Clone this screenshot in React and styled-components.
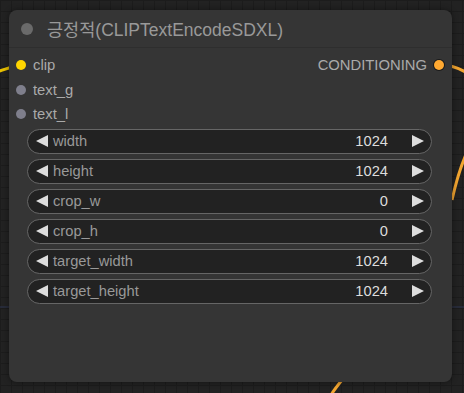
import React from 'react';
import styled, { createGlobalStyle } from 'styled-components';

const GlobalStyle = createGlobalStyle`
  html, body {
    margin: 0;
    padding: 0;
    background: #222222;
    font-family: "Liberation Sans", Arial, "Noto Sans CJK KR", sans-serif;
  }
`;

const inputs = [
  { name: 'clip', color: '#ffd500' },
  { name: 'text_g', color: '#7f7f8c' },
  { name: 'text_l', color: '#7f7f8c' },
];

const widgets = [
  { name: 'width', value: 1024 },
  { name: 'height', value: 1024 },
  { name: 'crop_w', value: 0 },
  { name: 'crop_h', value: 0 },
  { name: 'target_width', value: 1024 },
  { name: 'target_height', value: 1024 },
];

const Canvas = styled.div`
  position: relative;
  width: 464px;
  height: 393px;
  overflow: hidden;
  padding: 10px 0 0 9px;
  box-sizing: border-box;
  background-color: #222222;
  background-image:
    linear-gradient(to right, #1c1c1c 1px, transparent 1px),
    linear-gradient(to bottom, #1c1c1c 1px, transparent 1px);
  background-size: 11px 11px;
`;

const Wires = styled.svg`
  position: absolute;
  left: 0;
  top: 0;
  pointer-events: none;
`;

const Node = styled.div`
  position: relative;
  width: 443px;
  height: 372px;
  background: #353535;
  border-radius: 8px;
  box-shadow: 0 0 6px rgba(0, 0, 0, 0.45);
  display: flex;
  flex-direction: column;
`;

const Title = styled.div`
  height: 37px;
  display: flex;
  align-items: center;
  gap: 14px;
  padding-left: 12px;
  border-bottom: 1px solid #2e2e2e;
  color: #999999;
  font-size: 17.5px;
`;

const TitleDot = styled.span`
  width: 12px;
  height: 12px;
  border-radius: 50%;
  background: #6a6a6a;
`;

const Slots = styled.div`
  display: flex;
  justify-content: space-between;
  padding: 5px 0 0 0;
`;

const SlotCol = styled.div`
  display: flex;
  flex-direction: column;
`;

const Slot = styled.div`
  height: 24.5px;
  display: flex;
  align-items: center;
  gap: 7px;
  flex-direction: ${(p) => (p.$out ? 'row-reverse' : 'row')};
  padding: ${(p) => (p.$out ? '0 8px 0 0' : '0 0 0 7px')};
  color: #aaaaaa;
  font-size: 14.8px;
`;

const Dot = styled.span`
  width: 10px;
  height: 10px;
  border-radius: 50%;
  background: ${(p) => p.$color};
  box-shadow: ${(p) => (p.$out ? '0 0 0 1px #1a1a1a' : 'none')};
`;

const Widgets = styled.div`
  display: flex;
  flex-direction: column;
  gap: 5px;
  padding: 2px 20px 0 18px;
`;

const Widget = styled.div`
  height: 25px;
  box-sizing: border-box;
  border: 1px solid #666666;
  border-radius: 13px;
  background: #222222;
  display: flex;
  align-items: center;
  padding: 0 7px 0 8px;
  font-size: 14.7px;
`;

const Arrow = styled.span`
  width: 0;
  height: 0;
  border-top: 6px solid transparent;
  border-bottom: 6px solid transparent;
  ${(p) => (p.$right ? 'border-left: 12px solid #dddddd;' : 'border-right: 12px solid #dddddd;')}
`;

const Label = styled.span`
  flex: 1;
  margin-left: 5px;
  color: #999999;
`;

const Value = styled.span`
  color: #dddddd;
  margin-right: 24px;
`;

export default function App() {
  return (
    <>
      <GlobalStyle />
      <Canvas>
        <Wires width="464" height="393">
          <line x1="0" y1="307" x2="9" y2="307" stroke="#2d3550" strokeWidth="1" />
          <line x1="452" y1="307" x2="464" y2="307" stroke="#2d3550" strokeWidth="1" />
          <path d="M-4 72 C4 70 10 67 20 65" stroke="#e8c000" strokeWidth="3" fill="none" />
          <path d="M440 65 C452 65 460 68 468 74" stroke="#f2a530" strokeWidth="3" fill="none" />
          <path d="M452 200 C456 182 461 165 468 150" stroke="#f2a530" strokeWidth="3" fill="none" />
          <path d="M331 395 C334 390 338 385 342 380" stroke="#f2a530" strokeWidth="3" fill="none" />
        </Wires>
        <Node>
          <Title>
            <TitleDot />
            <span>긍정적(CLIPTextEncodeSDXL)</span>
          </Title>
          <Slots>
            <SlotCol>
              {inputs.map((s) => (
                <Slot key={s.name}>
                  <Dot $color={s.color} />
                  {s.name}
                </Slot>
              ))}
            </SlotCol>
            <SlotCol>
              <Slot $out>
                <Dot $out $color="#ffa931" />
                CONDITIONING
              </Slot>
            </SlotCol>
          </Slots>
          <Widgets>
            {widgets.map((w) => (
              <Widget key={w.name}>
                <Arrow />
                <Label>{w.name}</Label>
                <Value>{w.value}</Value>
                <Arrow $right />
              </Widget>
            ))}
          </Widgets>
        </Node>
      </Canvas>
    </>
  );
}
